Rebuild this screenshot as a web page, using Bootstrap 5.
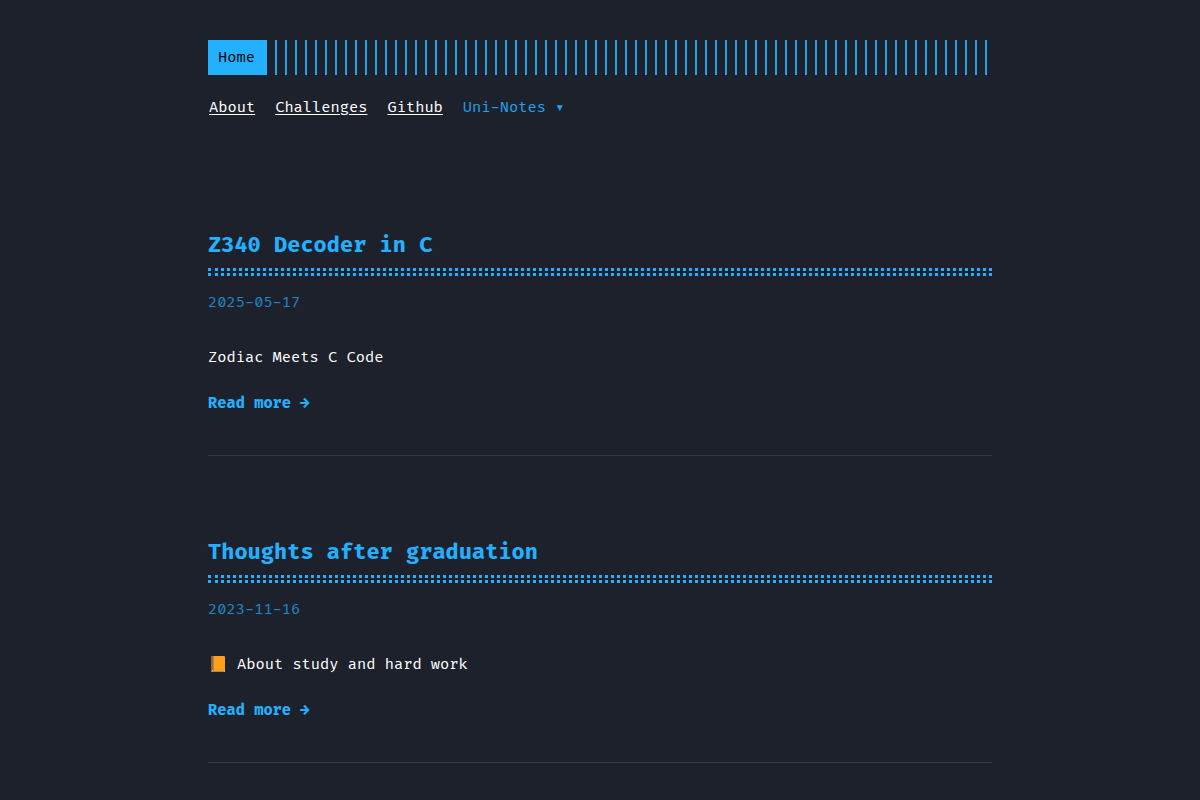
<!DOCTYPE html>
<html lang="en">
<head>
<meta charset="utf-8">
<meta name="viewport" content="width=device-width, initial-scale=1">
<title>Home</title>
<link href="https://cdn.jsdelivr.net/npm/bootstrap@5.3.0/dist/css/bootstrap.min.css" rel="stylesheet">
<style>
  :root { --accent: #23b0ff; --page: #1d212c; }
  body {
    background: var(--page);
    color: #fff;
    font: 15px/24px "Fira Code", "DejaVu Sans Mono", monospace;
  }
  .page { max-width: 864px; padding: 40px; }
  .site-logo { background: var(--accent); color: #000; padding: 6px 12px 5px 10px; }
  .stripes {
    background: repeating-linear-gradient(90deg, transparent 0 8px, var(--accent) 8px 10px);
    opacity: .9;
  }
  .site-menu { gap: 10px 20px; margin: 21px 0 110px; padding-left: 1px; }
  .site-menu a { color: #fff; text-underline-offset: 2px; }
  .menu-trigger { color: var(--accent); opacity: .9; line-height: 24px; }
  .post + .post { margin-top: 81px; }
  .post { border-bottom: 1px solid #353943; padding-bottom: 39px; }
  .post-title { font: 700 22px/30px "Fira Mono", "Fira Code", "DejaVu Sans Mono", monospace; }
  .post-title a, .read-more { color: var(--accent); }
  /* two rows of dots under each title */
  .post-title::after {
    content: "";
    display: block;
    height: 8px;
    margin-top: 8px;
    border: 3px dotted var(--accent);
    border-width: 3px 0;
  }
  .post-date { color: var(--accent); opacity: .7; margin: 15px 0 31px; }
  .post-text { margin-bottom: 22px; }
  .book { width: 20px; height: 20px; margin-right: 9px; }
</style>
</head>
<body>
<div class="page container-fluid mx-auto">
  <header>
    <div class="d-flex">
      <a class="site-logo text-decoration-none" href="#">Home</a>
      <div class="stripes flex-grow-1"></div>
    </div>
    <nav aria-label="Main">
      <ul class="site-menu list-unstyled d-flex flex-wrap">
        <li><a href="#about">About</a></li>
        <li><a href="#challenges">Challenges</a></li>
        <li><a href="#github">Github</a></li>
        <li><button class="menu-trigger border-0 bg-transparent p-0" type="button">Uni-Notes ▾</button></li>
      </ul>
    </nav>
  </header>
  <main>
    <article class="post">
      <h1 class="post-title mb-0"><a class="text-decoration-none" href="#z340">Z340 Decoder in C</a></h1>
      <div class="post-date"><time datetime="2025-05-17">2025-05-17</time></div>
      <p class="post-text">Zodiac Meets C Code</p>
      <a class="read-more d-inline-block fw-bold text-decoration-none" href="#z340">Read more →</a>
    </article>
    <article class="post">
      <h1 class="post-title mb-0"><a class="text-decoration-none" href="#thoughts">Thoughts after graduation</a></h1>
      <div class="post-date"><time datetime="2023-11-16">2023-11-16</time></div>
      <p class="post-text d-flex align-items-center"><svg class="book flex-shrink-0" viewBox="0 0 20 20" role="img" aria-label="Orange book"><path d="M3 1h2v16H3z" fill="#8a6a42"/><path d="M4 15h13v2H4z" fill="#b9bcc0"/><path d="M5 1h11a1 1 0 0 1 1 1v13a1 1 0 0 1-1 1H5z" fill="#fca01c"/><path d="M5 1h1v15H5z" fill="#cf7f1c"/><path d="M3 16h13v1H3z" fill="#a08a68"/></svg>About study and hard work</p>
      <a class="read-more d-inline-block fw-bold text-decoration-none" href="#thoughts">Read more →</a>
    </article>
  </main>
</div>
<script src="https://cdn.jsdelivr.net/npm/bootstrap@5.3.0/dist/js/bootstrap.bundle.min.js"></script>
</body>
</html>
